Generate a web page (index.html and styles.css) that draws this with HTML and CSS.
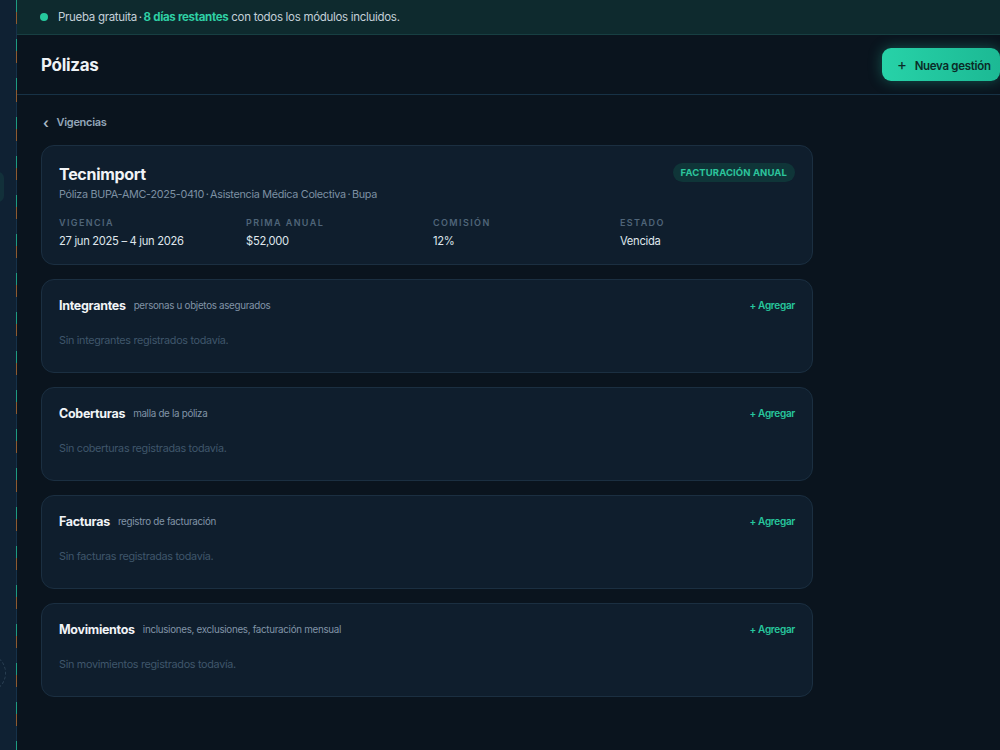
FILE: index.html
```html
<!DOCTYPE html>
<html lang="es">
<head>
    <meta charset="utf-8" />
    <title>Pólizas</title>
    <link rel="stylesheet" href="styles.css">
</head>
<body>
    <div class="layout">
        <aside class="sidebar">
            <div class="side_tab"></div>
            <div class="side_ring"></div>
        </aside>
        <main class="main">
            <div class="trial_bar">
                <span class="trial_dot"></span>
                <span>Prueba gratuita&#8201;·&#8201;<b>8 días restantes</b> con todos los módulos incluidos.</span>
            </div>
            <header class="page_header">
                <h1>Pólizas</h1>
                <button class="btn_new"><span class="plus">+</span>Nueva gestión</button>
            </header>
            <section class="content">
                <a class="back_link" href="#"><span class="chev">‹</span> Vigencias</a>

                <div class="card policy">
                    <div class="policy_top">
                        <div>
                            <h2>Tecnimport</h2>
                            <p class="policy_sub">Póliza BUPA-AMC-2025-0410&#8201;·&#8201;Asistencia Médica Colectiva&#8201;·&#8201;Bupa</p>
                        </div>
                        <span class="badge">FACTURACIÓN ANUAL</span>
                    </div>
                    <div class="facts">
                        <div><div class="fact_label">Vigencia</div><div class="fact_value">27 jun 2025 – 4 jun 2026</div></div>
                        <div><div class="fact_label">Prima anual</div><div class="fact_value">$52,000</div></div>
                        <div><div class="fact_label">Comisión</div><div class="fact_value">12%</div></div>
                        <div><div class="fact_label">Estado</div><div class="fact_value">Vencida</div></div>
                    </div>
                </div>

                <div class="card block">
                    <div class="block_head">
                        <h3>Integrantes</h3><span class="block_note">personas u objetos asegurados</span>
                        <a class="add" href="#">+ Agregar</a>
                    </div>
                    <p class="empty">Sin integrantes registrados todavía.</p>
                </div>

                <div class="card block">
                    <div class="block_head">
                        <h3>Coberturas</h3><span class="block_note">malla de la póliza</span>
                        <a class="add" href="#">+ Agregar</a>
                    </div>
                    <p class="empty">Sin coberturas registradas todavía.</p>
                </div>

                <div class="card block">
                    <div class="block_head">
                        <h3>Facturas</h3><span class="block_note">registro de facturación</span>
                        <a class="add" href="#">+ Agregar</a>
                    </div>
                    <p class="empty">Sin facturas registradas todavía.</p>
                </div>

                <div class="card block">
                    <div class="block_head">
                        <h3>Movimientos</h3><span class="block_note">inclusiones, exclusiones, facturación mensual</span>
                        <a class="add" href="#">+ Agregar</a>
                    </div>
                    <p class="empty">Sin movimientos registrados todavía.</p>
                </div>
            </section>
        </main>
    </div>
</body>
</html>
```

FILE: styles.css
```css
html,
body {
    margin: 0;
    height: 100%;
    overflow: hidden;
}

body {
    background: #0a141e;
    font-family: Inter, "Open Sans", sans-serif;
    color: #e6ecf1;
    letter-spacing: -0.3px;
}

.layout {
    display: flex;
    height: 750px;
}

.sidebar {
    position: relative;
    width: 16px;
    flex: none;
    background: #0f2133;
    border-right: 1px solid #16324a;
}

/* dashed teal / orange rail */
.sidebar::after {
    content: "";
    position: absolute;
    top: 0;
    right: -1px;
    width: 1px;
    height: 100%;
    background: repeating-linear-gradient(to bottom,
            #1fae8c 0px, #1fae8c 12px,
            #a4622c 12px, #a4622c 24px,
            transparent 24px, transparent 39px);
    opacity: 0.85;
}

.side_tab {
    position: absolute;
    top: 172px;
    left: -8px;
    width: 12px;
    height: 30px;
    border-radius: 6px;
    background: #12303a;
}

.side_ring {
    position: absolute;
    top: 655px;
    left: -26px;
    width: 30px;
    height: 34px;
    border-radius: 50%;
    border: 1px dashed #2a3f52;
}

.main {
    flex: 1;
    min-width: 0;
}

.trial_bar {
    height: 34px;
    display: flex;
    align-items: center;
    gap: 10px;
    padding-left: 23px;
    background: #0e2a2e;
    border-bottom: 1px solid #173f42;
    font-size: 11.5px;
    color: #c4d0d8;
}

.trial_bar b {
    color: #2fd0a5;
    font-weight: 700;
}

.trial_dot {
    width: 8px;
    height: 8px;
    border-radius: 50%;
    background: #26c99d;
}

.page_header {
    height: 59px;
    display: flex;
    align-items: center;
    justify-content: space-between;
    padding-left: 24px;
    border-bottom: 1px solid #173246;
}

.page_header h1 {
    margin: 0;
    font-size: 17px;
    font-weight: 700;
    color: #eef2f5;
}

.btn_new {
    width: 118px;
    height: 33px;
    border: none;
    border-radius: 9px;
    background: linear-gradient(90deg, #27d2a8, #1cb994);
    box-shadow: 0 0 14px rgba(38, 210, 168, 0.35);
    color: #0b2b27;
    font-family: Inter, sans-serif;
    font-size: 11.5px;
    font-weight: 600;
    letter-spacing: -0.3px;
    white-space: nowrap;
    text-align: left;
    padding-left: 15px;
}

.btn_new .plus {
    font-size: 15px;
    font-weight: 400;
    margin-right: 8px;
}

.content {
    width: 772px;
    padding: 19px 0 0 24px;
    display: flex;
    flex-direction: column;
    gap: 14px;
}

.back_link {
    display: flex;
    align-items: center;
    gap: 8px;
    padding-left: 2px;
    margin-bottom: 1px;
    font-size: 11px;
    font-weight: 600;
    color: #93a6b9;
    text-decoration: none;
    height: 16px;
}

.back_link .chev {
    font-size: 14px;
    color: #a9b8c6;
}

.card {
    background: #0f1e2d;
    border: 1px solid #1b2f41;
    border-radius: 13px;
}

.policy {
    padding: 16px 17px 0 17px;
    box-sizing: border-box;
    height: 120px;
}

.policy_top {
    display: flex;
    justify-content: space-between;
    align-items: flex-start;
}

.policy h2 {
    margin: 2px 0 0 0;
    font-size: 16px;
    font-weight: 700;
    color: #f1f4f7;
}

.policy_sub {
    margin: 4px 0 0 0;
    font-size: 10.8px;
    color: #7d90a3;
}

.badge {
    margin-top: 1px;
    padding: 4px 8px;
    border-radius: 10px;
    background: #0f3538;
    color: #2cc59c;
    font-size: 9.5px;
    font-weight: 700;
    letter-spacing: 0.1px;
}

.facts {
    display: grid;
    grid-template-columns: repeat(4, 1fr);
    margin-top: 16px;
    margin-right: -12px;
}

.fact_label {
    font-size: 9px;
    font-weight: 600;
    letter-spacing: 1.4px;
    text-transform: uppercase;
    color: #4f6579;
}

.fact_value {
    margin-top: 6px;
    font-size: 11.2px;
    color: #dfe6ec;
}

.block {
    height: 94px;
    box-sizing: border-box;
    padding: 17px 17px 0 17px;
}

.block_head {
    display: flex;
    align-items: center;
    height: 16px;
}

.block h3 {
    margin: 0;
    font-size: 12.5px;
    font-weight: 700;
    color: #f1f4f7;
}

.block_note {
    margin-left: 8px;
    font-size: 9.8px;
    color: #8194a7;
}

.add {
    margin-left: auto;
    font-size: 10px;
    font-weight: 600;
    color: #27c79d;
    text-decoration: none;
}

.empty {
    margin: 21px 0 0 0;
    font-size: 10.8px;
    color: #3f566b;
}
```
